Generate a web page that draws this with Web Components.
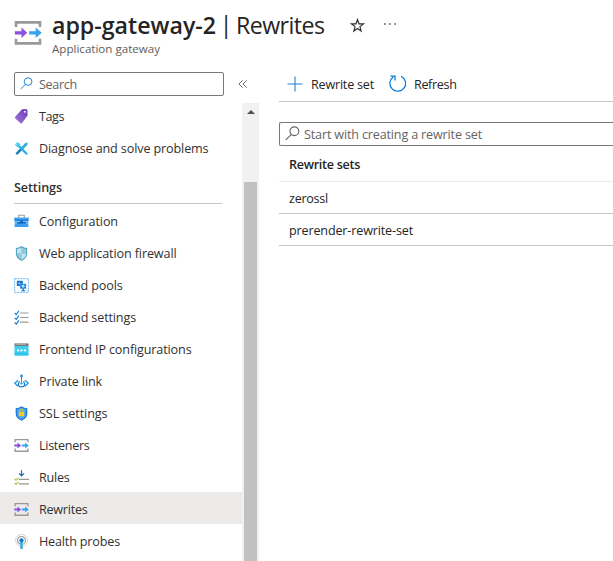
<!DOCTYPE html>
<html lang="en"><head><meta charset="utf-8"><title>Rewrites</title>
<style>
html,body{margin:0;height:100%;overflow:hidden;background:#fff}
body{font-family:"Open Sans","Noto Sans",sans-serif;font-size:12.6px;color:#323130}
</style></head><body><gateway-page></gateway-page>
<script>
const GATE = '<g fill="none" stroke="#999" stroke-width="1.5"><path d="M1.2 4.6V1.7h13.6v2.9M1.2 11.2v2.9h13.6v-2.9"/></g><path fill="#8a4fe0" d="M.3 7h3.5V4.8L7.6 8l-3.8 3.2V9H.3z"/><path fill="#35a3f0" d="M8.3 7h3.6V4.8L15.7 8l-3.8 3.2V9H8.3z"/>';
const ICONS = {
 gateway:GATE,
 biggate:'<g fill="none" stroke="#999" stroke-width="1.4"><path d="M1.600 4.800V2.300h12.800v2.500M1.600 11v2.500h12.800v-2.500"/></g><path fill="#8e50df" d="M1 7h3.500V5.100L7.600 7.900l-3.100 2.800V8.800H1z"/><path fill="#3ba0ee" d="M8.600 7h3.500V5.100l3.200 2.800-3.200 2.800V8.800H8.600z"/>',
 tag:'<defs><linearGradient id="g" x1="1" y1="0" x2="0" y2="1"><stop stop-color="#6a3bb5"/><stop offset="1" stop-color="#a475dd"/></linearGradient></defs><path fill="url(#g)" d="M8.300.600 12.800.300q1.200 0 1.300 1.200l.5 5.200-6 8.300q-.8.800-1.700.100L1.500 10q-.9-.8-.2-1.800z"/><path fill="#6f3fc0" d="M8.300.600 12.800.300q1.200 0 1.300 1.200l.2 2z"/><circle cx="11.600" cy="2.900" r="1.100" fill="#f3ebff"/>',
 tools:'<path d="m2.500 14 11-11.200" stroke="#1483b8" stroke-width="2.700"/><path d="m9 7.400 5.300-5.600" stroke="#32bfe9" stroke-width="1.700"/><path d="m4.200 4.400 9.200 9.100" stroke="#2aaee2" stroke-width="2.300" stroke-linecap="round"/><path d="M2 1.800q4-.8 4.800 2.800L5.200 6.700Q1.500 6.500 1.200 3l2.200 1.500z" fill="#44caf2"/>',
 config:'<path d="M5 4V1.300h6V4" fill="none" stroke="#a1a1a1" stroke-width="1.200"/><path fill="#2586df" d="M.4 4h15.200v4H.4z"/><path fill="#4aa8f5" d="M.4 4h15.200v1.400H.4z"/><path fill="#58b4fa" d="M.8 8h14.400v5.800H.8z"/><path fill="#1267c0" d="M3.500 10.500h9V8.600h-3V7h-3v1.600h-3z"/><path fill="#3c98ee" d="M.8 11h14.400v2.800H.8z"/>',
 shield:'<path fill="#4fa2c4" d="M8 0q3 2 6 2v6q0 5-6 8-6-3-6-8V2q3 0 6-2z"/><path fill="#91c9df" d="M8 1.500q2.400 1.500 4.900 1.700V8H8zM3.100 8H8v6.600Q3.100 12 3.100 8z"/><path fill="#c7e4ee" d="M8 1.500V8H3.100V3.200Q5.600 3 8 1.500zM8 8h4.900q0 4-4.900 6.600z"/>',
 pools:'<path fill="none" stroke="#55b0f2" stroke-dasharray="2 1" d="M.7.700h14.600v14.600H.7z"/><rect x="3" y="3" width="6.500" height="5.500" rx=".6" fill="#1674d1"/><rect x="6.400" y="6" width="6.500" height="5.500" rx=".6" fill="#1674d1" stroke="#fff" stroke-width=".3"/><path fill="#1674d1" d="M9 11h1.500v2H12v1H7.800v-1H9z"/><path fill="#a4e5fa" d="m9.700 7 1.700 1v1.500l-1.700 1-1.700-1V8z"/><circle cx="5.500" cy="5.500" r="1" fill="#8ed4f8"/>',
 settings:'<g fill="none" stroke="#1681d9" stroke-width="1.300"><path d="m.7 3.200 1.700 1.600L5.300.8M.7 8.400 2.400 10l2.900-4M.7 13.400 2.400 15l2.900-4"/></g><path stroke="#999" stroke-width="1.300" d="M6.500 3.200h9M6.500 8h9M6.500 13h9"/>',
 frontend:'<path fill="#3dcef0" d="M.5 4h15v10.500H.5z"/><path fill="#20b4de" d="M.5 11.500h15v3H.5z" opacity=".4"/><path fill="#777" d="M.5 1.500h15v2.800H.5z"/><path fill="#b8b8b8" d="M1.500 2.400h11v.8h-11z"/><g fill="#fff"><circle cx="4.300" cy="9" r="1.200"/><circle cx="8" cy="9" r="1.200"/><circle cx="11.700" cy="9" r="1.200"/></g>',
 link:'<g fill="none" stroke="#2b95de"><path stroke-width="1.500" d="M4.300 6.600.9 9.800 4.300 13M11.700 6.600l3.400 3.200-3.400 3.200"/><path d="M8 2v7" stroke="#68737a"/><path stroke="#1476d2" stroke-width="1.300" d="M5.800 7.700q-3 6 2.200 6t2.200-6"/></g><circle cx="8" cy="2" r="1.500" fill="#2a8bda"/><circle cx="8" cy="10" r="1.300" fill="#22a8df"/>',
 ssl:'<path fill="#1676d2" d="M8 .3q3 2 6.200 2V8q0 5-6.200 7.700Q1.800 13 1.800 8V2.300q3.200 0 6.200-2z"/><path fill="#49a5ec" d="M8 1.500q2.500 1.500 5 1.700V8q0 4-5 6.400Q3 12 3 8V3.200q2.500-.2 5-1.700z"/><path fill="none" stroke="#f0c62b" stroke-width="1.100" d="M6.200 7V5.400q0-1.600 1.800-1.600t1.800 1.600V7"/><rect x="5.200" y="6.500" width="5.600" height="4.500" rx=".5" fill="#ffca20"/><path fill="#f0a72b" d="M7.500 8h1v1.700h-1z"/>',
 rules:'<path fill="none" stroke="#176fb7" stroke-width="1.300" d="M8 .300v5.500M5.300 3.600 8 6.200l2.700-2.600"/><g fill="none" stroke="#a5ce32" stroke-width="1.300"><path d="m.6 9.500 1.500 1.300 2.500-2.600M.6 14l1.500 1.300 2.500-2.600"/></g><path stroke="#999" stroke-width="1.400" d="M5 9.900h11M5 14.700h11"/>',
 probe:'<g fill="none"><circle cx="8" cy="6.800" r="6.300" stroke="#cfcfcf"/><circle cx="8" cy="6.800" r="4.200" stroke="#999" stroke-width="1.200"/></g><path d="M6.700 8h2.600v8H6.700z" fill="#31a9df"/><circle cx="8" cy="6.800" r="2.300" fill="#1478c8"/>',
 search:'<g fill="none" stroke="currentColor" stroke-width="1.200"><circle cx="10" cy="5.600" r="4.700"/><path d="M6.600 9.100.8 14.900"/></g>',
 plus:'<path stroke="#1b82d8" stroke-width="1.060" d="M8 .5v15M.5 8h15"/>',
 refresh:'<g fill="none" stroke="#0078d4" stroke-width="1.150"><path d="M11.400 1.200A7.400 7.400 0 1 1 4 1.800"/><path d="M1.500 1h4.200v4.200"/></g>',
 star:'<path fill="none" stroke="#323130" stroke-width="1.250" stroke-linejoin="miter" d="m8 1.700 1.600 4.500 4.700.1-3.700 2.900 1.300 4.700L8 11.200l-3.900 2.700 1.300-4.700-3.700-2.900 4.700-.1z"/>',
 dots:'<g fill="#504e4c"><path d="M1.200 7.200h1.800v1.600H1.200zM7.100 7.200h1.800v1.600H7.100zM13 7.200h1.800v1.600H13z"/></g>',
 collapse:'<path fill="none" stroke="#605e5c" stroke-width="1.500" d="M7.500 2 1.500 8l6 6M14 2 8 8l6 6"/>'
};
class UiIcon extends HTMLElement{
 connectedCallback(){const s=this.getAttribute('size')||15;
  this.attachShadow({mode:'open'}).innerHTML=`<style>:host{display:block;flex:none;width:${s}px;height:${s}px}svg{display:block;width:100%;height:100%}</style><svg viewBox="0 0 16 16">${ICONS[this.getAttribute('name')]}</svg>`;}
}
customElements.define('ui-icon',UiIcon);

// A single-line label whose tracking is adjusted to fill its width attribute.
class UiLabel extends HTMLElement{
 connectedCallback(){
  this.attachShadow({mode:'open'}).innerHTML='<style>:host{display:block;flex:none;white-space:nowrap;line-height:18px}span{display:inline-block}</style><span></span>';
  const el=this.shadowRoot.querySelector('span');el.textContent=this.getAttribute('text');
  const w=+this.getAttribute('width');
  if(w){const n=el.textContent.length;el.style.letterSpacing=((w-el.getBoundingClientRect().width)/n)+'px';}
 }
}
customElements.define('ui-label',UiLabel);

class NavItem extends HTMLElement{
 connectedCallback(){
  this.attachShadow({mode:'open'}).innerHTML=`<style>:host{display:flex;align-items:center;gap:10px;height:32px;padding:var(--nudge,0) 0 0 14px;box-sizing:border-box}:host([selected]){background:#edebe9}ui-label{padding-top:2px}</style><ui-icon name="${this.getAttribute('icon')}"></ui-icon><ui-label text="${this.getAttribute('label')}" width="${this.getAttribute('width')}"></ui-label>`;}
}
customElements.define('nav-item',NavItem);

class SearchField extends HTMLElement{
 connectedCallback(){
  this.attachShadow({mode:'open'}).innerHTML=`<style>:host{display:flex;align-items:center;box-sizing:border-box;height:24px;border:1px solid #7a7978;border-radius:2px;padding-left:5px;color:#666462}ui-icon{color:var(--glass,#666);margin-bottom:var(--lift,1px)}ui-label{margin-left:var(--space,6px);padding-top:2px}</style><ui-icon name="search" size="${this.getAttribute('size')}"></ui-icon><ui-label text="${this.getAttribute('text')}" width="${this.getAttribute('width')}"></ui-label>`;}
}
customElements.define('search-field',SearchField);

class PageHeading extends HTMLElement{
 connectedCallback(){
  this.attachShadow({mode:'open'}).innerHTML=`<style>
  :host{display:flex;height:70px;padding-left:13px;box-sizing:border-box}
  .mark{margin-top:18px}.copy{margin:9px 0 0 9px;width:298px}
  .title{display:flex;height:32px;font-size:23.200px;color:#252423}
  .title ui-label{line-height:33px}.title .bar{width:20px;text-align:center;line-height:31px}
  .strong{font-weight:600;width:164px}.sub{font-size:11.600px;color:#605e5c;line-height:16px}
  .star{margin:18px 0 0 0}.dots{margin:17px 0 0 18px}
  </style><ui-icon class="mark" name="biggate" size="30"></ui-icon><div class="copy"><div class="title"><ui-label class="strong" text="app-gateway-2" width="164"></ui-label><ui-label class="bar" text="|"></ui-label><ui-label text="Rewrites" width="88.5"></ui-label></div><ui-label class="sub" text="Application gateway" width="108"></ui-label></div><ui-icon class="star" name="star"></ui-icon><ui-icon class="dots" name="dots" size="14"></ui-icon>`;}
}
customElements.define('page-heading',PageHeading);

class SideNav extends HTMLElement{
 connectedCallback(){
  const group=a=>a.map(([i,l,w,s])=>`<nav-item icon="${i}" label="${l}" width="${w}" ${s?'selected':''}></nav-item>`).join('');
  this.attachShadow({mode:'open'}).innerHTML=`<style>
  :host{display:flex;flex-direction:column;width:259px;flex:none;padding-top:2px;box-sizing:border-box}
  .find{display:flex;align-items:center;padding-left:14px;gap:14px;height:24px}
  search-field{width:210px;--glass:#1681d9;--lift:1px}
  .body{display:grid;grid-template-columns:242px 17px;flex:1;min-height:0}
  .items{padding-top:4px;overflow:hidden}
  .settings{--nudge:2px}
  .heading{height:40px;box-sizing:border-box;margin-left:14px;width:208px;padding-top:15px;border-bottom:1px solid #c8c6c4;font-weight:600}
  .rail{background:#f1f1f1;margin-top:7px;display:flex;flex-direction:column;align-items:center}
  .up{width:0;height:0;border:4px solid transparent;border-top:0;border-bottom:4px solid #505050;margin:7px 0 68px}
  .thumb{width:13px;flex:1;background:#c1c1c1}
  </style><div class="find"><search-field text="Search" width="38" size="13"></search-field><ui-icon name="collapse" size="10"></ui-icon></div>
  <div class="body"><div class="items">${group([['tag','Tags',25],['tools','Diagnose and solve problems',169.5]])}<div class="heading"><ui-label text="Settings" width="48"></ui-label></div><div class="settings">${group([['config','Configuration',79],['shield','Web application firewall',137.5],['pools','Backend pools',83.5],['settings','Backend settings',97],['frontend','Frontend IP configurations',152.5],['link','Private link',63],['ssl','SSL settings',68.5],['gateway','Listeners',50.5],['rules','Rules',30.5],['gateway','Rewrites',48.5,1],['probe','Health probes',81]])}</div></div><div class="rail"><div class="up"></div><div class="thumb"></div></div></div>`;}
}
customElements.define('side-nav',SideNav);

class RewritePanel extends HTMLElement{
 connectedCallback(){
  this.attachShadow({mode:'open'}).innerHTML=`<style>
  :host{display:block;flex:1;min-width:0;margin-left:20px;color:#252423}
  .tools{display:flex;align-items:center;height:32px;box-sizing:border-box;padding:0 0 3px 8px;border-bottom:1px solid #c8c6c4}
  .tools ui-label{margin:2px 15px 0 8px}.tools .r{margin-left:8px}.tools ui-icon{margin-bottom:1px}
  search-field{margin-top:20px;border-right:0;border-radius:2px 0 0 2px;--space:4px}
  .row{height:32px;box-sizing:border-box;padding:8px 0 0 10px;border-bottom:1px solid #c8c6c4}
  .head{height:36px;padding-top:10px;font-weight:600;border-color:#edebe9}
  </style><div class="tools"><ui-icon name="plus" size="16"></ui-icon><ui-label text="Rewrite set" width="63"></ui-label><ui-icon name="refresh" size="17"></ui-icon><ui-label class="r" text="Refresh" width="42.5"></ui-label></div>
  <search-field text="Start with creating a rewrite set" width="178" size="15"></search-field>
  <div class="row head"><ui-label text="Rewrite sets" width="71"></ui-label></div><div class="row"><ui-label text="zerossl" width="39"></ui-label></div><div class="row"><ui-label text="prerender-rewrite-set" width="124"></ui-label></div>`;}
}
customElements.define('rewrite-panel',RewritePanel);

class GatewayPage extends HTMLElement{
 connectedCallback(){this.attachShadow({mode:'open'}).innerHTML='<style>:host{display:flex;flex-direction:column;width:613px;height:561px;overflow:hidden;background:#fff}.content{display:flex;flex:1;min-height:0}</style><page-heading></page-heading><div class="content"><side-nav></side-nav><rewrite-panel></rewrite-panel></div>';}
}
customElements.define('gateway-page',GatewayPage);
</script></body></html>
